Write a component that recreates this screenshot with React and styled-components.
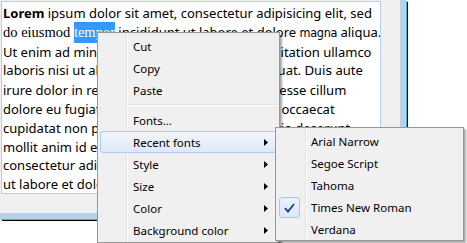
import React from "react";
import styled, { createGlobalStyle } from "styled-components";

const GlobalStyle = createGlobalStyle`
  html, body {
    margin: 0;
    padding: 0;
    background: #ffffff;
  }
  body {
    width: 467px;
    height: 243px;
    overflow: hidden;
    font-family: "Noto Sans", "Open Sans", sans-serif;
  }
`;

const Screen = styled.div`
  position: relative;
  width: 467px;
  height: 243px;
  overflow: hidden;
  background: #ffffff;
`;

const Window = styled.div`
  box-sizing: border-box;
  width: 406px;
  height: 219px;
  padding: 1px 0 0 1px;
  background: #f0f0f0;
  border-right: 6px solid #b9d1ea;
  border-bottom: 6px solid #b9d1ea;
  box-shadow: 1px 1px 0 #3fb6d3, 2px 2px 0 #000000;
`;

const Editor = styled.div`
  box-sizing: border-box;
  width: 380px;
  height: 193px;
  padding: 2px 0 0 1px;
  background: #ffffff;
  border: 1px solid #b6d0ea;
  overflow: hidden;
  font-size: 13px;
  line-height: 18.8px;
  color: #000000;
`;

const Line = styled.div`
  white-space: nowrap;
`;

const Strong = styled.b`
  font-weight: 700;
`;

const Serif = styled.span`
  font-family: "Liberation Serif", serif;
  font-size: 14.5px;
`;

const Selected = styled(Serif)`
  background: #3399ff;
  color: #ffffff;
  padding: 2px 0 3px;
`;

const Narrow = styled.span`
  font-family: "Liberation Sans Narrow", "Arial Narrow", "DejaVu Sans Condensed",
    "Liberation Sans", sans-serif;
  font-size: 12.5px;
  letter-spacing: -0.3px;
`;

const Tahoma = styled.span`
  font-family: "DejaVu Sans", sans-serif;
  font-size: 12.5px;
`;

const Menu = styled.div`
  position: absolute;
  left: ${(p) => p.$left}px;
  top: ${(p) => p.$top}px;
  width: ${(p) => p.$width}px;
  box-sizing: border-box;
  padding: 2px 2px ${(p) => p.$bottom}px;
  border: 1px solid #979797;
  background: #f0f0f0
    linear-gradient(
      to right,
      transparent ${(p) => p.$gutter}px,
      #e2e3e3 ${(p) => p.$gutter}px,
      #e2e3e3 ${(p) => p.$gutter + 1}px,
      #ffffff ${(p) => p.$gutter + 1}px,
      #ffffff ${(p) => p.$gutter + 2}px,
      transparent ${(p) => p.$gutter + 2}px
    )
    no-repeat;
  box-shadow: 2px 2px 2px rgba(0, 0, 0, 0.35);
  font-size: 11.5px;
  color: #000000;
`;

const Item = styled.div`
  position: relative;
  box-sizing: border-box;
  height: 22px;
  display: flex;
  align-items: center;
  justify-content: space-between;
  padding: 0 8px 0 32px;
  border: 1px solid ${(p) => (p.$active ? "#aecbf0" : "transparent")};
  border-radius: 3px;
  background: ${(p) =>
    p.$active ? "linear-gradient(#f1f6fc, #e0e9f6)" : "transparent"};
`;

const Separator = styled.div`
  height: 8px;
  display: flex;
  align-items: center;
  padding-left: 27px;

  &::after {
    content: "";
    flex: 1;
    box-sizing: border-box;
    height: 2px;
    border-top: 1px solid #e0e0e0;
    border-bottom: 1px solid #ffffff;
  }
`;

const CheckBox = styled.span`
  position: absolute;
  left: 0;
  top: 0;
  width: 21px;
  height: 21px;
  box-sizing: border-box;
  border: 1px solid #a6c8f0;
  border-radius: 3px;
  background: linear-gradient(#e9f2fd, #dbe8f8);
  display: flex;
  align-items: center;
  justify-content: center;
`;

const Arrow = () => (
  <svg width="4" height="7" viewBox="0 0 4 7">
    <polygon points="0,0 4,3.5 0,7" fill="#000" />
  </svg>
);

const Check = () => (
  <svg width="11" height="10" viewBox="0 0 11 10">
    <path
      d="M1 5.2 L4 8.5 L10 1"
      fill="none"
      stroke="#1c3a8c"
      strokeWidth="1.8"
    />
  </svg>
);

const mainItems = [
  { label: "Cut" },
  { label: "Copy" },
  { label: "Paste" },
  { separator: true },
  { label: "Fonts..." },
  { label: "Recent fonts", sub: true, active: true },
  { label: "Style", sub: true },
  { label: "Size", sub: true },
  { label: "Color", sub: true },
  { label: "Background color", sub: true },
];

const recentFonts = [
  { label: "Arial Narrow" },
  { label: "Segoe Script" },
  { label: "Tahoma" },
  { label: "Times New Roman", checked: true },
  { label: "Verdana" },
];

export default function App() {
  return (
    <Screen>
      <GlobalStyle />
      <Window>
        <Editor>
          <Line>
            <Strong>Lorem</Strong> ipsum dolor sit amet, consectetur adipisicing elit, sed
          </Line>
          <Line>
            <Serif>do eiusmod </Serif>
            <Selected>tempor</Selected> incididunt ut labore et dolore <Narrow>magna</Narrow> aliqua.
          </Line>
          <Line>Ut enim ad minim veniam, quis nostrud exercitation ullamco</Line>
          <Line>
            laboris nisi ut aliquip ex ea commodo consequat. <Tahoma>Duis</Tahoma> aute
          </Line>
          <Line>irure dolor in reprehenderit in voluptate velit esse cillum</Line>
          <Line>dolore eu fugiat nulla pariatur. Excepteur sint occaecat</Line>
          <Line>cupidatat non proident, sunt in culpa qui officia deserunt</Line>
          <Line>mollit anim id est laborum. Lorem ipsum dolor sit amet,</Line>
          <Line>consectetur adipisicing elit, sed do eiusmod tempor incididunt</Line>
          <Line>ut labore et dolore magna aliqua.</Line>
        </Editor>
      </Window>

      <Menu $left={97} $top={32} $width={183} $gutter={28} $bottom={1}>
        {mainItems.map((it, i) =>
          it.separator ? (
            <Separator key={i} />
          ) : (
            <Item key={i} $active={it.active}>
              <span>{it.label}</span>
              {it.sub && <Arrow />}
            </Item>
          )
        )}
      </Menu>

      <Menu $left={275} $top={127} $width={189} $gutter={29} $bottom={0}>
        {recentFonts.map((it, i) => (
          <Item key={i}>
            {it.checked && (
              <CheckBox>
                <Check />
              </CheckBox>
            )}
            <span>{it.label}</span>
          </Item>
        ))}
      </Menu>
    </Screen>
  );
}
